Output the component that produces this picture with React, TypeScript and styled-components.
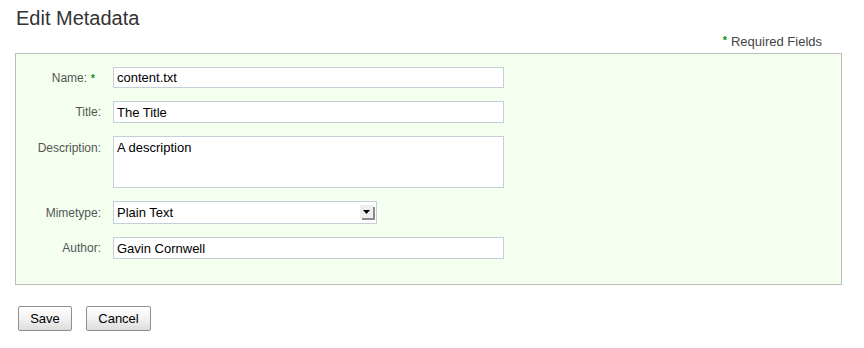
import { useState } from 'react';
import styled, { createGlobalStyle } from 'styled-components';

const GlobalStyle = createGlobalStyle`
  body {
    margin: 0;
    background: #fff;
    font-family: "Liberation Sans", Arial, Helvetica, sans-serif;
  }
`;

const Page = styled.div`
  padding: 0 22px 0 15px;
  color: #333;
`;

const Heading = styled.h1`
  margin: 0;
  padding: 6px 0 0 1px;
  height: 24px;
  font-size: 20px;
  line-height: 24px;
  font-weight: normal;
  color: #333;
`;

const RequiredNote = styled.div`
  display: flex;
  justify-content: flex-end;
  align-items: baseline;
  gap: 4px;
  height: 23px;
  padding-right: 20px;
  font-size: 13px;
  line-height: 23px;
  color: #444;
`;

const Star = styled.span<{ $small?: boolean }>`
  color: #118a11;
  font-weight: bold;
  font-size: ${(p) => (p.$small ? '10px' : '11px')};
  position: relative;
  top: ${(p) => (p.$small ? '1px' : '-2px')};
`;

const Panel = styled.div`
  border: 1px solid #bcbcbc;
  background: #f4fff0;
  padding: 13px 0 25px 0;
`;

const Form = styled.div`
  display: grid;
  grid-template-columns: 85px 391px;
  column-gap: 12px;
  row-gap: 13px;
`;

const Label = styled.label<{ $top?: boolean }>`
  display: flex;
  justify-content: flex-end;
  align-items: ${(p) => (p.$top ? 'flex-start' : 'center')};
  gap: 4px;
  padding-top: ${(p) => (p.$top ? '5px' : '0')};
  font-size: 12px;
  color: #555;
`;

const TextInput = styled.input<{ $h: number }>`
  box-sizing: border-box;
  width: 391px;
  height: ${(p) => p.$h}px;
  margin: 0;
  padding: 0 3px;
  border: 1px solid #c3cfd9;
  background: #fff;
  font-family: "Liberation Sans", Arial, sans-serif;
  font-size: 13px;
  color: #000;
  outline: none;
`;

const TextArea = styled.textarea`
  box-sizing: border-box;
  width: 391px;
  height: 52px;
  margin: 0;
  padding: 3px 3px;
  border: 1px solid #c3cfd9;
  background: #fff;
  font-family: "Liberation Sans", Arial, sans-serif;
  font-size: 13px;
  line-height: 15px;
  color: #000;
  resize: none;
  outline: none;
`;

const SelectWrap = styled.div`
  position: relative;
  width: 264px;
  height: 23px;
`;

const Select = styled.select`
  box-sizing: border-box;
  width: 264px;
  height: 23px;
  margin: 0;
  padding: 0 3px;
  border: 1px solid #c3cfd9;
  background: #fff;
  appearance: none;
  -webkit-appearance: none;
  font-family: "Liberation Sans", Arial, sans-serif;
  font-size: 13px;
  color: #000;
  outline: none;
`;

const ArrowBox = styled.div`
  position: absolute;
  top: 4px;
  right: 4px;
  width: 13px;
  height: 13px;
  background: #eee;
  box-shadow: 2px 2px 0 #8a8a8a;
  display: flex;
  align-items: center;
  justify-content: center;
  pointer-events: none;
`;

const Actions = styled.div`
  display: flex;
  gap: 14px;
  padding: 21px 0 0 3px;
`;

const Button = styled.button<{ $w: number }>`
  width: ${(p) => p.$w}px;
  height: 25px;
  padding: 0;
  border: 1px solid #8f8f8f;
  border-radius: 2px;
  background: linear-gradient(#ffffff, #f2f2f2 50%, #dcdcdc);
  font-family: "Liberation Sans", Arial, sans-serif;
  font-size: 13px;
  color: #000;
`;

const App = () => {
  const [name, setName] = useState('content.txt');
  const [title, setTitle] = useState('The Title');
  const [description, setDescription] = useState('A description');
  const [mimetype, setMimetype] = useState('text/plain');
  const [author, setAuthor] = useState('Gavin Cornwell');

  return (
    <>
      <GlobalStyle />
      <Page>
        <Heading>Edit Metadata</Heading>
        <RequiredNote>
          <Star>*</Star>
          <span>Required Fields</span>
        </RequiredNote>
        <Panel>
          <Form>
            <Label>
              <span>Name:</span>
              <Star $small>*</Star>
              <span style={{ width: 2 }} />
            </Label>
            <TextInput $h={21} value={name} onChange={(e) => setName(e.target.value)} />

            <Label>Title:</Label>
            <TextInput $h={22} value={title} onChange={(e) => setTitle(e.target.value)} />

            <Label $top>Description:</Label>
            <TextArea value={description} onChange={(e) => setDescription(e.target.value)} />

            <Label>Mimetype:</Label>
            <SelectWrap>
              <Select value={mimetype} onChange={(e) => setMimetype(e.target.value)}>
                <option value="text/plain">Plain Text</option>
                <option value="text/html">HTML</option>
                <option value="text/xml">XML</option>
              </Select>
              <ArrowBox>
                <svg width="7" height="4" viewBox="0 0 7 4">
                  <path d="M0 0h7L3.5 4z" fill="#000" />
                </svg>
              </ArrowBox>
            </SelectWrap>

            <Label>Author:</Label>
            <TextInput $h={22} value={author} onChange={(e) => setAuthor(e.target.value)} />
          </Form>
        </Panel>
        <Actions>
          <Button $w={54}>Save</Button>
          <Button $w={65}>Cancel</Button>
        </Actions>
      </Page>
    </>
  );
};

export default App;
